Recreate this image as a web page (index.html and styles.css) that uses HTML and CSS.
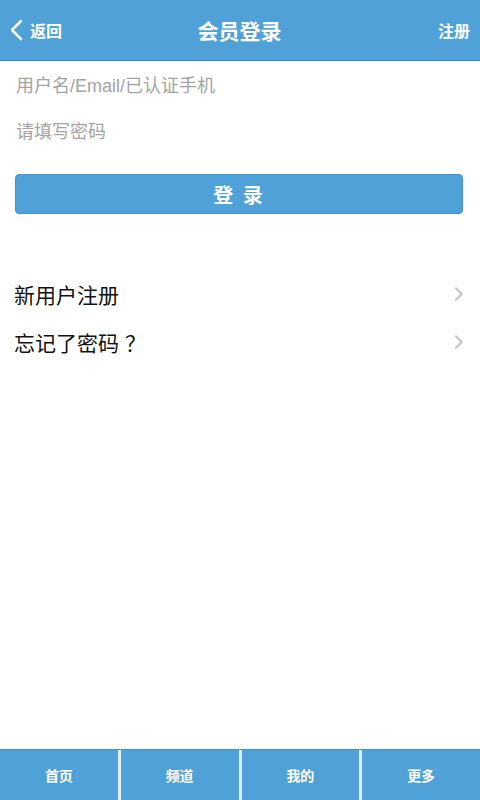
FILE: index.html
```html
<!DOCTYPE html>
<html lang="zh-CN">
<head>
    <meta charset="UTF-8">
    <meta name="viewport" content="width=device-width, initial-scale=1.0">
    <title>会员登录</title>
    <link rel="stylesheet" href="styles.css">
</head>
<body>

<div class="page">
    <div class="header">
        <a href="#" class="back">
            <svg width="14" height="22" viewBox="0 0 14 22"><path d="M12 2 L3 11 L12 20" fill="none" stroke="#fff" stroke-width="2.6" stroke-linecap="round" stroke-linejoin="round"/></svg>
            <span>返回</span>
        </a>
        <h1>会员登录</h1>
        <a href="#" class="reg">注册</a>
    </div>

    <div class="form">
        <input type="text" placeholder="用户名/Email/已认证手机">
        <input type="password" placeholder="请填写密码">
        <button>登 录</button>
    </div>

    <ul class="links">
        <li><a href="#">新用户注册<span class="arrow"></span></a></li>
        <li><a href="#"><span>忘记了密码<span class="qmark">？</span></span><span class="arrow"></span></a></li>
    </ul>

    <div class="footer">
        <a href="#">首页</a>
        <a href="#">频道</a>
        <a href="#">我的</a>
        <a href="#">更多</a>
    </div>
</div>

</body>
</html>
```

FILE: styles.css
```css
body {
    margin: 0;
    font-family: "Liberation Sans", "Noto Sans CJK SC", sans-serif;
    background-color: #fff;
}
.page {
    height: 800px;
    display: flex;
    flex-direction: column;
}
.header {
    height: 60px;
    background-color: #4fa1d7;
    border-bottom: 1px solid #2f8fd0;
    display: flex;
    align-items: center;
    justify-content: space-between;
    padding: 0 10px 0 9px;
    color: #fff;
}
.header a {
    color: #fff;
    text-decoration: none;
    font-weight: bold;
    font-size: 16px;
}
.back {
    display: flex;
    align-items: center;
    gap: 7px;
    width: 80px;
}
.back svg {
    display: block;
}
.header h1 {
    margin: 0;
    font-size: 21px;
    font-weight: bold;
}
.reg {
    width: 80px;
    text-align: right;
}
.form {
    padding: 2px 17px 0 15px;
    display: flex;
    flex-direction: column;
}
input[type="text"], input[type="password"] {
    height: 46px;
    border: none;
    outline: none;
    padding: 0 1px;
    font-family: inherit;
    font-size: 18px;
}
input::placeholder {
    color: #a3a3a3;
}
button {
    margin-top: 19px;
    height: 40px;
    background-color: #4fa1d7;
    border: 1px solid #3e93cc;
    border-radius: 4px;
    color: #fff;
    font-family: inherit;
    font-size: 20px;
    font-weight: bold;
    letter-spacing: 2px;
}
.links {
    list-style: none;
    margin: 56px 0 0;
    padding: 0 15px 0 14px;
}
.links a {
    height: 48px;
    display: flex;
    align-items: center;
    justify-content: space-between;
    color: #111;
    text-decoration: none;
    font-size: 21px;
}
.qmark {
    padding-left: 6px;
}
.arrow {
    width: 8px;
    height: 8px;
    border-top: 2px solid #c4c4c4;
    border-right: 2px solid #c4c4c4;
    transform: rotate(45deg);
    margin-right: 4px;
}
.footer {
    margin-top: auto;
    height: 50px;
    border-top: 1px solid #3e93cc;
    display: flex;
    gap: 3px;
    background-color: #e4eef6;
}
.footer a {
    flex: 1;
    background-color: #4fa1d7;
    color: #fff;
    text-decoration: none;
    font-size: 14px;
    font-weight: bold;
    display: flex;
    align-items: center;
    justify-content: center;
}
```
